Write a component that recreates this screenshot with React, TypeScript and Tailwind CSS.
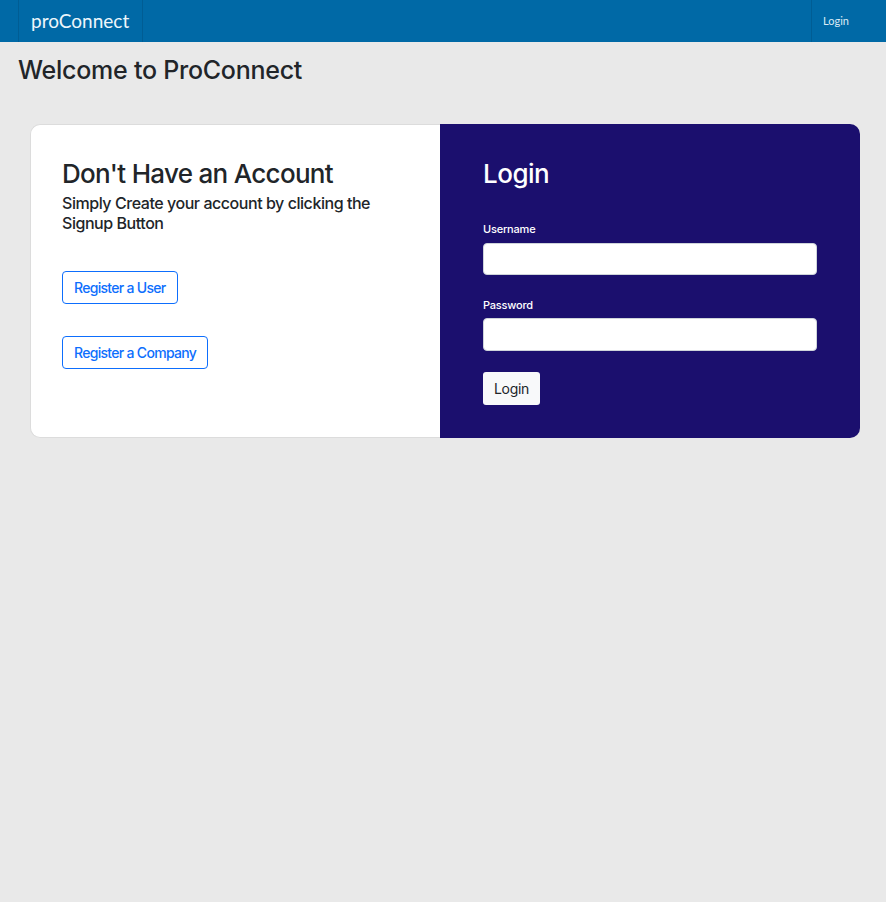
export default function App() {
  return (
    <div
      className="min-h-[902px] bg-[#e9e9e9] text-[#212529]"
      style={{ fontFamily: 'Inter, "Liberation Sans", sans-serif' }}
    >
      <nav className="h-[42px] bg-[#0069a6] flex items-stretch justify-between">
        <div className="ml-[18px] w-[125px] border-x border-[#005d94] flex items-center pl-[12px]">
          <span
            className="text-[19px] text-[#eef6fb]"
            style={{ fontFamily: 'Lato, "Open Sans", sans-serif' }}
          >
            proConnect
          </span>
        </div>
        <div className="w-[75px] border-l border-[#005d94] flex items-center pl-[11px]">
          <span
            className="text-[11px] text-[#dcebf5]"
            style={{ fontFamily: 'Lato, "Open Sans", sans-serif' }}
          >
            Login
          </span>
        </div>
      </nav>

      <h1 className="pt-[13px] pl-[18px] text-[25px] leading-[30px] font-medium tracking-[-0.25px]">
        Welcome to ProConnect
      </h1>

      <div className="ml-[30px] mr-[26px] mt-[39px] flex">
        <div className="w-[410px] bg-white border border-[#dcdcdc] border-r-0 rounded-l-[10px] px-[31px] pt-[33px]">
          <h2 className="text-[26px] leading-[31px] font-medium tracking-[-0.7px]">Don't Have an Account</h2>
          <p className="mt-[5px] text-[16px] leading-[19.5px] font-medium tracking-[-0.45px] w-[330px]">
            Simply Create your account by clicking the Signup Button
          </p>
          <div className="mt-[38px] flex flex-col items-start gap-[32px]">
            <button className="h-[33px] px-[11px] border border-[#0d6efd] rounded-[4px] text-[14px] font-medium tracking-[-0.7px] text-[#0d6efd]">
              Register a User
            </button>
            <button className="h-[33px] px-[11px] border border-[#0d6efd] rounded-[4px] text-[14px] font-medium tracking-[-0.7px] text-[#0d6efd]">
              Register a Company
            </button>
          </div>
        </div>

        <div className="flex-1 bg-[#1b0f6e] rounded-r-[10px] px-[43px] pt-[34px] pb-[33px] text-white">
          <h2 className="text-[26px] leading-[31px] font-medium tracking-[-0.5px]">Login</h2>
          <label className="block mt-[32px] text-[11px] leading-[16px] font-medium tracking-[-0.2px]">Username</label>
          <input
            type="text"
            className="block mt-[6px] w-full h-[32px] bg-white rounded-[4px] border border-[#ced4da]"
          />
          <label className="block mt-[22px] text-[11px] leading-[16px] font-medium tracking-[-0.2px]">Password</label>
          <input
            type="password"
            className="block mt-[5px] w-full h-[33px] bg-white rounded-[4px] border border-[#ced4da]"
          />
          <button className="mt-[21px] h-[33px] px-[11px] bg-[#f8f9fa] rounded-[3px] text-[14px] tracking-[-0.3px] text-[#212529]">
            Login
          </button>
        </div>
      </div>
    </div>
  );
}
